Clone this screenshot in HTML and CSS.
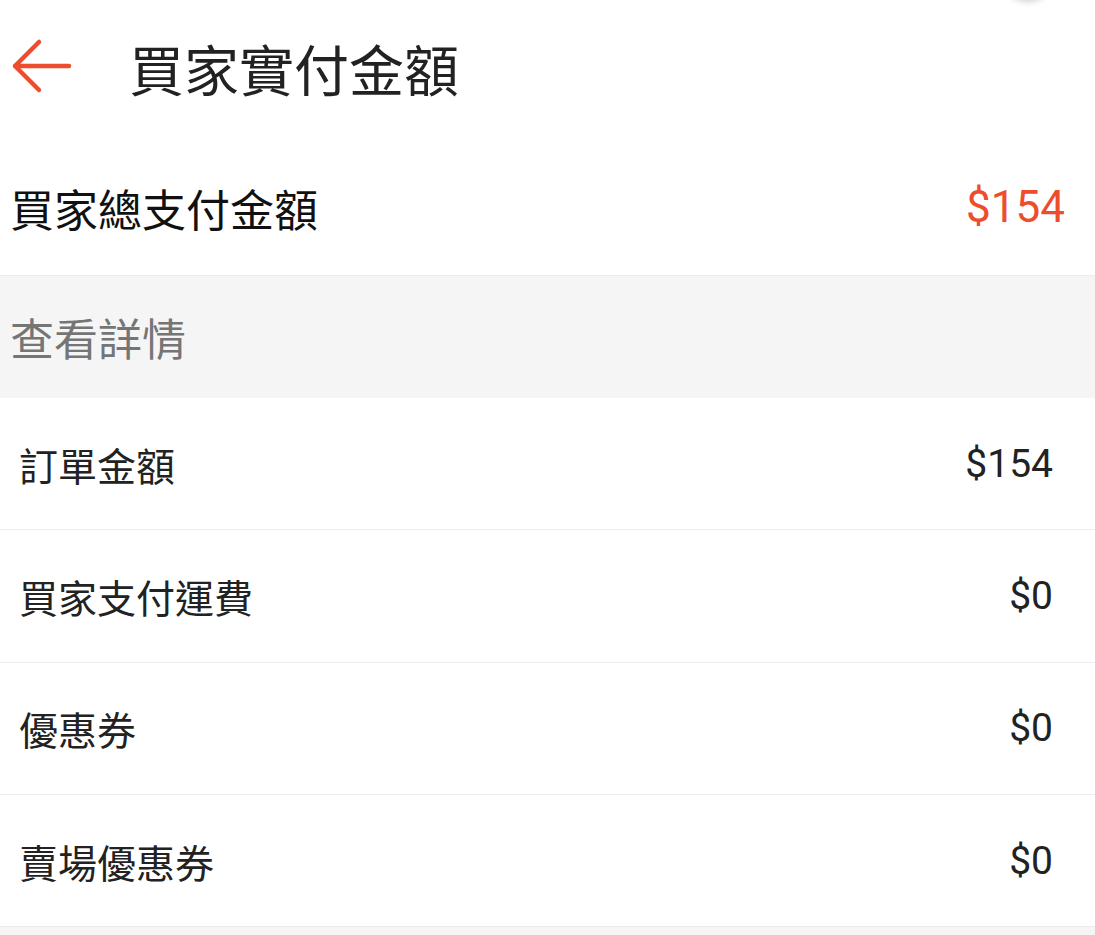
FILE: index.html
```html
<!DOCTYPE html>
<html lang="zh-Hant">
<head>
<meta charset="utf-8">
<link rel="stylesheet" href="styles.css">
</head>
<body>
<div class="page">
  <div class="fab-shadow"></div>
  <header class="topbar">
    <svg class="back" width="62" height="56" viewBox="0 0 62 56" aria-hidden="true">
      <path d="M5 28 H59 M5 28 L29 4 M5 28 L29 52" fill="none" stroke="#ee4d2d" stroke-width="4.5" stroke-linecap="round" stroke-linejoin="round"/>
    </svg>
    <h1 class="title">買家實付金額</h1>
  </header>
  <section class="total">
    <span class="total-label">買家總支付金額</span>
    <span class="total-amount">$154</span>
  </section>
  <section class="details-head">查看詳情</section>
  <ul class="list">
    <li class="row"><span class="label">訂單金額</span><span class="amount">$154</span></li>
    <li class="row"><span class="label">買家支付運費</span><span class="amount">$0</span></li>
    <li class="row"><span class="label">優惠券</span><span class="amount">$0</span></li>
    <li class="row"><span class="label">賣場優惠券</span><span class="amount">$0</span></li>
  </ul>
</div>
</body>
</html>
```
FILE: styles.css
```css
html, body {
  margin: 0;
  padding: 0;
  background: #f5f5f5;
}
body {
  font-family: Roboto, "Noto Sans CJK TC", "Noto Sans", sans-serif;
  color: #222;
}
.page {
  position: relative;
  width: 1095px;
  height: 935px;
  overflow: hidden;
  background: #f5f5f5;
}
.fab-shadow {
  position: absolute;
  left: 1003px;
  top: -50px;
  width: 50px;
  height: 50px;
  border-radius: 50%;
  background: #fff;
  box-shadow: 0 2px 6px rgba(0,0,0,0.18);
}
.topbar {
  display: flex;
  align-items: center;
  height: 139px;
  padding-left: 10px;
  background: #fff;
  box-sizing: border-box;
}
.back {
  display: block;
  margin-top: -7px;
}
.title {
  margin: 6px 0 0 57px;
  font-size: 55px;
  font-weight: 400;
  line-height: 1;
  color: #222;
}
.total {
  display: flex;
  align-items: center;
  justify-content: space-between;
  height: 138px;
  padding: 0 30px 0 10px;
  box-sizing: border-box;
  background: #fff;
  border-bottom: 1px solid #ececec;
  margin-top: -1px;
}
.total-label {
  font-size: 44px;
  color: #111;
  margin-top: 2px;
}
.total-amount {
  font-size: 44px;
  color: #ee4d2d;
}
.details-head {
  display: flex;
  align-items: center;
  height: 122px;
  padding-left: 10px;
  font-size: 44px;
  color: #757575;
  background: #f5f5f5;
  box-sizing: border-box;
}
.list {
  list-style: none;
  margin: 0;
  padding: 0;
}
.row {
  display: flex;
  align-items: center;
  justify-content: space-between;
  height: 132.33px;
  padding: 0 42px 0 19px;
  box-sizing: border-box;
  background: #fff;
  border-bottom: 1px solid #eeeaee;
}
.label {
  font-size: 39px;
  color: #222;
}
.amount {
  font-size: 39px;
  color: #222;
}
```
